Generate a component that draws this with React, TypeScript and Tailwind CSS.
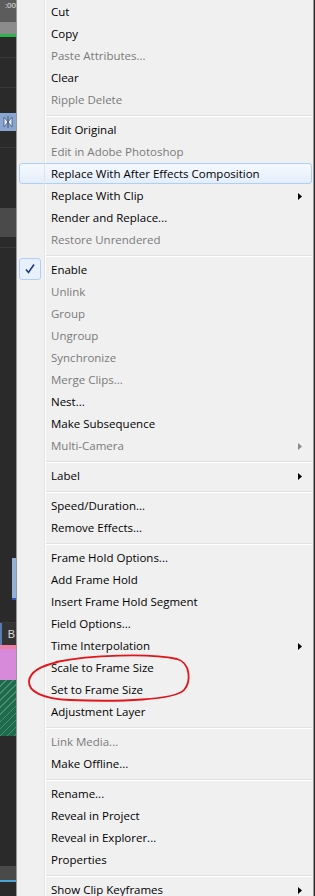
type Item =
  | { sep: true }
  | { sep?: false; label: string; disabled?: boolean; sub?: boolean; hover?: boolean; checked?: boolean };

const S: Item = { sep: true };

const items: Item[] = [
  { label: 'Cut' },
  { label: 'Copy' },
  { label: 'Paste Attributes...', disabled: true },
  { label: 'Clear' },
  { label: 'Ripple Delete', disabled: true },
  S,
  { label: 'Edit Original' },
  { label: 'Edit in Adobe Photoshop', disabled: true },
  { label: 'Replace With After Effects Composition', hover: true },
  { label: 'Replace With Clip', sub: true },
  { label: 'Render and Replace...' },
  { label: 'Restore Unrendered', disabled: true },
  S,
  { label: 'Enable', checked: true },
  { label: 'Unlink', disabled: true },
  { label: 'Group', disabled: true },
  { label: 'Ungroup', disabled: true },
  { label: 'Synchronize', disabled: true },
  { label: 'Merge Clips...', disabled: true },
  { label: 'Nest...' },
  { label: 'Make Subsequence' },
  { label: 'Multi-Camera', disabled: true, sub: true },
  S,
  { label: 'Label', sub: true },
  S,
  { label: 'Speed/Duration...' },
  { label: 'Remove Effects...' },
  S,
  { label: 'Frame Hold Options...' },
  { label: 'Add Frame Hold' },
  { label: 'Insert Frame Hold Segment' },
  { label: 'Field Options...' },
  { label: 'Time Interpolation', sub: true },
  { label: 'Scale to Frame Size' },
  { label: 'Set to Frame Size' },
  { label: 'Adjustment Layer' },
  S,
  { label: 'Link Media...', disabled: true },
  { label: 'Make Offline...' },
  S,
  { label: 'Rename...' },
  { label: 'Reveal in Project' },
  { label: 'Reveal in Explorer...' },
  { label: 'Properties' },
  S,
  { label: 'Show Clip Keyframes', sub: true },
];

// gutter column shared by items and separators (gray + white line)
const Gutter = ({ children }: { children?: React.ReactNode }) => (
  <>
    <div className="relative w-[28px] shrink-0 border-r border-r-[#e2e3e3]">{children}</div>
    <div className="w-px shrink-0 bg-white" />
  </>
);

const MenuRow = ({ item }: { item: Item }) => {
  if (item.sep) {
    return (
      <div className="flex h-[8px] shrink-0">
        <Gutter />
        <div className="mr-[1px] flex-1 pt-[5px]">
          <div className="h-px bg-[#e0e0e0]" />
          <div className="h-px bg-white" />
        </div>
      </div>
    );
  }

  return (
    <div className="relative flex h-[22px] shrink-0">
      {item.hover && (
        <div className="absolute top-[1px] right-[1px] bottom-0 left-[2px] rounded-[3px] border border-[#aecff7] bg-[image:linear-gradient(to_bottom,#f5f9fe,#e4eefa)]" />
      )}
      <Gutter>
        {item.checked && (
          <div className="absolute top-0 bottom-0 left-[2px] flex w-[22px] items-center justify-center rounded-[3px] border border-[#aecff7] bg-[#e8f0fb]">
            <svg width="12" height="12" viewBox="0 0 12 12">
              <path d="M2 6.5 L4.5 9.5 L10 1.5" fill="none" stroke="#203c7c" strokeWidth="1.6" />
            </svg>
          </div>
        )}
      </Gutter>
      <div
        className={`relative flex flex-1 items-center pt-[2px] pl-[5px] text-[11.5px] ${
          item.disabled ? 'text-[#7a7a7a]' : 'text-black'
        }`}
      >
        <span className="whitespace-nowrap">{item.label}</span>
        {item.sub && (
          <svg className="mr-[11px] ml-auto" width="4" height="7" viewBox="0 0 4 7">
            <polygon points="0,0 4,3.5 0,7" fill={item.disabled ? '#8a8a8a' : '#000'} />
          </svg>
        )}
      </div>
    </div>
  );
};

// slice of the Premiere timeline showing left of the menu
const TimelineStrip = () => (
  <div className="flex w-[16px] shrink-0 flex-col overflow-hidden bg-[#2a2a2a]">
    <div className="h-[22px] shrink-0 overflow-hidden bg-[#5c5c5c] pt-[1px] text-right font-['Liberation_Sans',sans-serif] text-[8px] leading-[9px] text-[#e6e6e6]">
      :00
    </div>
    <div className="h-[12px] shrink-0 bg-[#8b8b8b]" />
    <div className="h-[3px] shrink-0 bg-[#2fb34f]" />
    <div className="h-[20px] shrink-0" />
    <div className="h-px shrink-0 bg-[#3a3a3a]" />
    <div className="h-[29px] shrink-0" />
    <div className="h-px shrink-0 bg-[#3a3a3a]" />
    <div className="h-[25px] shrink-0" />
    <div className="flex h-[18px] shrink-0 items-center justify-center bg-[#8aa5cf]">
      <svg width="10" height="14" viewBox="0 0 10 14">
        <path d="M1 2 L5 7 L1 12 Z M9 2 L5 7 L9 12 Z" fill="#e8eef8" stroke="#3c5478" strokeWidth="0.8" />
        <line x1="5" y1="1" x2="5" y2="13" stroke="#3c5478" strokeWidth="1" />
      </svg>
    </div>
    <div className="h-[16px] shrink-0" />
    <div className="h-px shrink-0 bg-[#3a3a3a]" />
    <div className="h-[60px] shrink-0" />
    <div className="h-[29px] shrink-0 bg-[#4a4a4a]" />
    <div className="h-[10px] shrink-0" />
    <div className="h-px shrink-0 bg-[#3a3a3a]" />
    <div className="h-[310px] shrink-0" />
    <div className="flex h-[42px] shrink-0">
      <div className="w-[12px]" />
      <div className="flex flex-1 flex-col bg-[#93b0d8]">
        <div className="flex-1" />
        <div className="h-[2px] bg-[#2b55c8]" />
      </div>
    </div>
    <div className="h-[22px] shrink-0" />
    <div className="h-px shrink-0 bg-[#3a3a3a]" />
    <div className="flex h-[22px] shrink-0 items-center bg-[#333333] text-[11px] text-[#dcdcdc]">
      <div className="h-full w-[2px] bg-[#5a7bb0]" />
      <span className="ml-auto pr-[1px] font-['Liberation_Sans',sans-serif]">B</span>
    </div>
    <div className="h-[4px] shrink-0 bg-[#ee7fa4]" />
    <div className="h-[31px] shrink-0 bg-[#d68ad9]" />
    <div className="h-[56px] shrink-0 bg-[image:repeating-linear-gradient(135deg,#1d6a4c_0px,#1d6a4c_4px,#4a8d70_4px,#4a8d70_5px)]" />
    <div className="h-[130px] shrink-0" />
    <div className="h-[14px] shrink-0 bg-[#4a4a4a]" />
    <div className="h-[2px] shrink-0 bg-[#4ba3d6]" />
    <div className="h-[14px] shrink-0" />
  </div>
);

export default function App() {
  return (
    <div className="relative flex h-[896px] w-[315px] overflow-hidden bg-[#2a2a2a] font-['Open_Sans',sans-serif]">
      <TimelineStrip />
      <div className="flex w-[298px] shrink-0 flex-col border-x border-[#979797] bg-[#f0f0f0]">
        {items.map((item, i) => (
          <MenuRow key={i} item={item} />
        ))}
      </div>
      <div className="w-px shrink-0 bg-[#2b2b2b]" />

      {/* red hand-drawn annotation */}
      <svg className="pointer-events-none absolute top-0 left-0" width="315" height="896">
        <path
          d="M56 662 C 90 655, 150 653, 177 659 C 191 663, 191 682, 184 690 C 175 700, 120 702, 70 700 C 42 699, 28 691, 29 681 C 30 672, 40 666, 58 662"
          fill="none"
          stroke="#e0161b"
          strokeWidth="1.8"
          strokeLinecap="round"
        />
      </svg>
    </div>
  );
}
